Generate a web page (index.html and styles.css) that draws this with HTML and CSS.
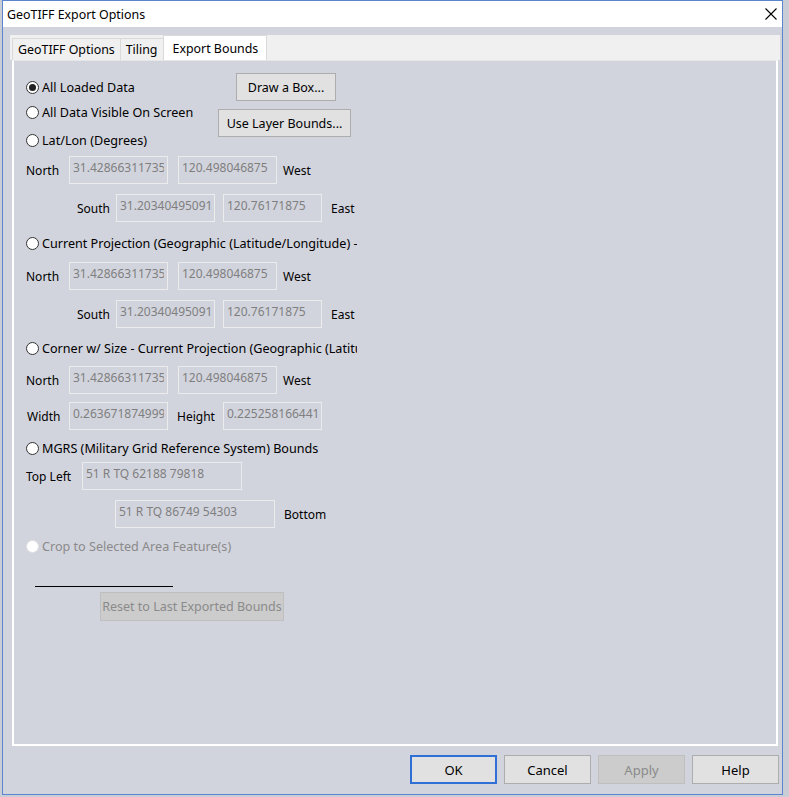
FILE: index.html
```html
<!DOCTYPE html>
<html lang="en">

<head>
    <meta charset="UTF-8" />
    <meta name="viewport" content="width=device-width, initial-scale=1.0" />
    <link rel="stylesheet" href="styles.css">
    <title>GeoTIFF Export Options</title>
</head>

<body>
    <div class="window">
        <div class="titlebar">
            <span class="title">GeoTIFF Export Options</span>
            <svg class="close" width="12" height="12" viewBox="0 0 12 12">
                <path d="M0.5 0.5 L11.5 11.5 M11.5 0.5 L0.5 11.5" stroke="#000" stroke-width="1.1" fill="none" />
            </svg>
        </div>

        <div class="tabstrip">
            <div class="tab">GeoTIFF Options</div>
            <div class="tab">Tiling</div>
            <div class="tab active">Export Bounds</div>
        </div>

        <div class="panel">
            <div class="top">
                <div class="left">
                    <label class="radio r1"><span class="dot checked"></span>All Loaded Data</label>
                    <label class="radio r2"><span class="dot"></span>All Data Visible On Screen</label>
                    <label class="radio"><span class="dot"></span>Lat/Lon (Degrees)</label>
                </div>
                <div class="right">
                    <button type="button" class="btn draw">Draw a Box...</button>
                    <button type="button" class="btn layer">Use Layer Bounds...</button>
                </div>
            </div>

            <div class="row mt6">
                <span class="lbl north">North</span>
                <input class="field" type="text" value="31.428663117359" readonly />
                <input class="field gap10" type="text" value="120.498046875" readonly />
                <span class="after6">West</span>
            </div>
            <div class="row mt10">
                <span class="lbl south">South</span>
                <input class="field" type="text" value="31.203404950917" readonly />
                <input class="field gap8" type="text" value="120.76171875" readonly />
                <span class="after9">East</span>
            </div>

            <label class="radio wide mt11"><span class="dot"></span>Current Projection (Geographic (Latitude/Longitude) - WGS84)</label>

            <div class="row mt9">
                <span class="lbl north">North</span>
                <input class="field" type="text" value="31.428663117359" readonly />
                <input class="field gap10" type="text" value="120.498046875" readonly />
                <span class="after6">West</span>
            </div>
            <div class="row mt10">
                <span class="lbl south">South</span>
                <input class="field" type="text" value="31.203404950917" readonly />
                <input class="field gap8" type="text" value="120.76171875" readonly />
                <span class="after9">East</span>
            </div>

            <label class="radio wide mt10"><span class="dot"></span>Corner w/ Size - Current Projection (Geographic (Latitude/Longitude) - WGS84)</label>

            <div class="row mt8">
                <span class="lbl north">North</span>
                <input class="field" type="text" value="31.428663117359" readonly />
                <input class="field gap10" type="text" value="120.498046875" readonly />
                <span class="after6">West</span>
            </div>
            <div class="row mt8">
                <span class="lbl width">Width</span>
                <input class="field" type="text" value="0.263671874999" readonly />
                <span class="lbl height">Height</span>
                <input class="field" type="text" value="0.225258166441" readonly />
            </div>

            <label class="radio wide mt8"><span class="dot"></span>MGRS (Military Grid Reference System) Bounds</label>

            <div class="row mt4">
                <span class="lbl topleft">Top Left</span>
                <input class="field mgrs" type="text" value="51 R TQ 62188 79818" readonly />
            </div>
            <div class="row mt10 indent">
                <input class="field mgrs" type="text" value="51 R TQ 86749 54303" readonly />
                <span class="after9">Bottom</span>
            </div>

            <label class="radio disabled mt8"><span class="dot"></span>Crop to Selected Area Feature(s)</label>

            <div class="rule"></div>
            <button type="button" class="btn reset" disabled>Reset to Last Exported Bounds</button>
        </div>

        <div class="footer">
            <button type="button" class="btn foot ok">OK</button>
            <button type="button" class="btn foot">Cancel</button>
            <button type="button" class="btn foot" disabled>Apply</button>
            <button type="button" class="btn foot">Help</button>
        </div>
    </div>
</body>

</html>
```

FILE: styles.css
```css
* {
    margin: 0;
    padding: 0;
    box-sizing: border-box;
    font-family: "Noto Sans", "Liberation Sans", sans-serif;
}

body {
    background-color: #c9cdd5;
    font-size: 12px;
    color: #000;
}

.window {
    margin-left: 2px;
    width: 781px;
    height: 795px;
    border: 1px solid #5b86cf;
    background-color: #d2d4dd;
    display: flex;
    flex-direction: column;
}

.titlebar {
    height: 26px;
    background-color: #ffffff;
    display: flex;
    align-items: center;
    justify-content: space-between;
    padding: 0 5px 0 4px;
}

.title {
    font-size: 12.4px;
}

/* tabs */
.tabstrip {
    margin: 8px 2px 0 7px;
    height: 25px;
    background-color: #f0f0f0;
    display: flex;
    align-items: flex-end;
    padding-left: 2px;
}

.tab {
    height: 22px;
    padding: 0 5px;
    border: 1px solid #dadada;
    border-bottom: none;
    border-right: none;
    display: flex;
    align-items: center;
    font-size: 12.4px;
}

.tab.active {
    height: 25px;
    padding: 0 8px 0 9px;
    background-color: #ffffff;
    border-right: 1px solid #dadada;
}

.panel {
    margin: 0 4px 0 9px;
    height: 686px;
    border: 2px solid #ffffff;
    border-top: 1px solid #e6e6e6;
    padding: 12px 0 0 12px;
}

/* radios */
.radio {
    display: flex;
    align-items: center;
    height: 20px;
    white-space: nowrap;
    font-size: 12.6px;
}

.radio .dot {
    width: 13px;
    height: 13px;
    border: 1px solid #333;
    border-radius: 50%;
    background-color: #fff;
    margin-right: 3px;
    position: relative;
    flex: none;
}

.radio .dot.checked::after {
    content: "";
    position: absolute;
    left: 2px;
    top: 2px;
    width: 7px;
    height: 7px;
    border-radius: 50%;
    background-color: #222;
}

.radio.wide {
    width: 331px;
    overflow: hidden;
}

.radio.disabled {
    color: #8a8a8a;
}

.radio.disabled .dot {
    border-color: #e0e0e0;
}

.top {
    display: flex;
}

.top .left {
    width: 192px;
    padding-top: 4px;
}

.r1 {
    margin-bottom: 5px;
}

.r2 {
    margin-bottom: 8px;
}

.top .right {
    display: flex;
    flex-direction: column;
    align-items: flex-start;
}

/* buttons */
.btn {
    height: 28px;
    font-size: 12.5px;
    background-color: #e1e1e1;
    border: 1px solid #adadad;
    color: #000;
}

.btn:disabled {
    background-color: #cccccc;
    border-color: #bfbfbf;
    color: #8a8a8a;
}

.draw {
    width: 100px;
    margin-left: 18px;
}

.layer {
    width: 133px;
    margin-top: 8px;
}

.reset {
    width: 184px;
    height: 29px;
    margin: 5px 0 0 74px;
    border-color: #eeeeee;
}

.rule {
    width: 138px;
    height: 1px;
    background-color: #000;
    margin: 30px 0 0 9px;
}

/* field rows */
.row {
    display: flex;
    align-items: center;
    height: 28px;
}

.field {
    width: 99px;
    height: 28px;
    border: 1px solid #ececec;
    background-color: transparent;
    color: #7f7f7f;
    font-size: 12px;
    padding: 0 3px 6px 3px;
    outline: none;
}

.field.mgrs {
    width: 160px;
}

.lbl.north {
    width: 43px;
}

.lbl.south {
    width: 39px;
    margin-left: 51px;
}

.lbl.width {
    width: 42px;
    margin-left: 1px;
}

.lbl.height {
    width: 46px;
    margin-left: 9px;
}

.lbl.topleft {
    width: 56px;
}

.indent {
    margin-left: 89px;
}

.gap10 { margin-left: 10px; }
.gap8 { margin-left: 8px; }
.after6 { margin-left: 6px; }
.after9 { margin-left: 9px; }

.mt4 { margin-top: 4px; }
.mt6 { margin-top: 6px; }
.mt8 { margin-top: 8px; }
.mt9 { margin-top: 9px; }
.mt10 { margin-top: 10px; }
.mt11 { margin-top: 11px; }

/* dialog buttons */
.footer {
    flex: 1;
    display: flex;
    justify-content: flex-end;
    align-items: flex-start;
    gap: 7px;
    padding: 9px 3px 0 0;
}

.btn.foot {
    width: 87px;
    height: 29px;
    font-size: 13px;
}

.btn.ok {
    border: 2px solid #2f6fd6;
}
```
